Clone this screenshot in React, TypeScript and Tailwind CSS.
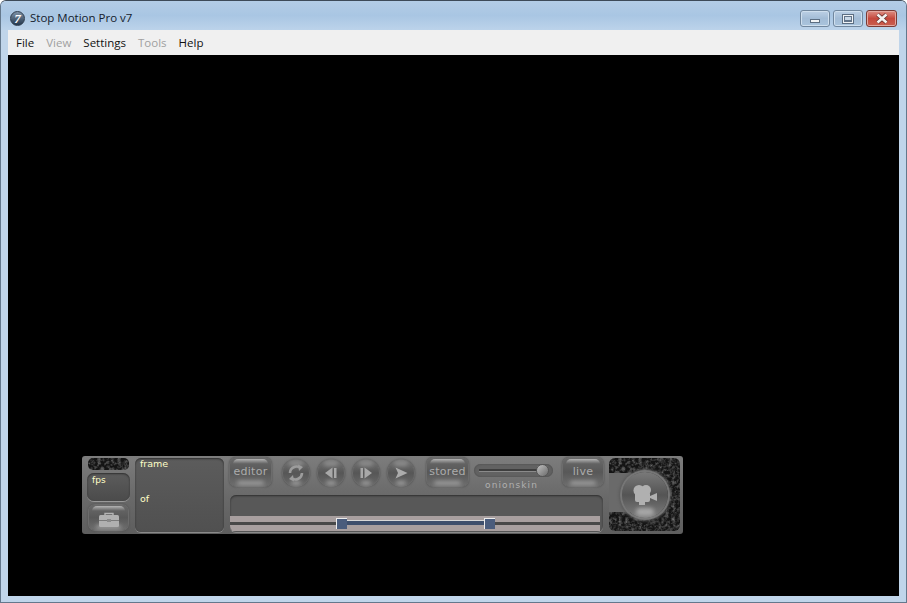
import React from 'react';

function Texture({ id }: { id: string }) {
  return (
    <svg className="absolute inset-0 w-full h-full" aria-hidden="true">
      <filter id={id}>
        <feTurbulence type="fractalNoise" baseFrequency="0.3" numOctaves="3" seed="4" />
        <feColorMatrix values="0 0 0 0 0.3  0 0 0 0 0.3  0 0 0 0 0.3  1.4 0 0 0 -0.55" />
      </filter>
      <rect width="100%" height="100%" fill="#141414" />
      <rect width="100%" height="100%" filter={`url(#${id})`} />
    </svg>
  );
}

function GlossButton({ label, className }: { label?: string; className: string }) {
  return (
    <div className={`relative flex items-center justify-center rounded-[6px] bg-gradient-to-b from-[#6a6a6a] via-[#585858] to-[#6e6e6e] shadow-[0_0_0_1px_#6c6c6c,0_0_2px_1px_#4a4a4a] ${className}`}>
      <div className="absolute top-[1px] left-[3px] right-[3px] h-[5px] rounded-t-[5px] bg-gradient-to-b from-[#b4b4b4] to-[#606060]" />
      <div className="absolute bottom-[1px] left-[7px] right-[7px] h-[4px] rounded-full bg-[#a0a0a0] blur-[2px]" />
      {label && <span className="relative -mt-[2px] text-[11px] leading-none tracking-[0.3px] text-[#acacac] font-['DejaVu_Sans',sans-serif]">{label}</span>}
    </div>
  );
}

function RoundButton({ children }: { children: React.ReactNode }) {
  return (
    <div className="relative flex items-center justify-center w-[26px] h-[26px] rounded-full bg-gradient-to-b from-[#747474] via-[#565656] to-[#6a6a6a] shadow-[0_0_0_1px_#6c6c6c,0_0_2px_1px_#484848]">
      <div className="absolute top-[1px] w-[14px] h-[5px] rounded-full bg-[#8e8e8e] blur-[2px]" />
      <div className="absolute bottom-[1px] w-[10px] h-[4px] rounded-full bg-[#a0a0a0] blur-[2px]" />
      <svg width="20" height="20" viewBox="0 0 20 20" className="relative">{children}</svg>
    </div>
  );
}

export default function App() {
  return (
    <div className="flex flex-col w-[907px] h-[603px] overflow-hidden rounded-t-[6px] bg-[#c0d5ea] border border-[#64788c] border-t-[#3d4a58] font-['Open_Sans',sans-serif]">
      {/* Title bar */}
      <div className="flex items-start justify-between h-[29px] pl-[9px] pr-[9px] bg-gradient-to-b from-[#b3cce6] via-[#a9c6e3] to-[#bcd3ea]">
        <div className="flex items-center gap-[5px] pt-[9px]">
          <div className="flex items-center justify-center w-[15px] h-[15px] rounded-full bg-gradient-to-b from-[#7f93a8] to-[#24384e] border border-[#2f3d4d] text-white text-[13px] font-bold italic leading-none font-['Liberation_Serif',serif]">7</div>
          <span className="text-[11.5px] leading-[16px] text-[#14202c]">Stop Motion Pro v7</span>
        </div>
        <div className="flex gap-[3px] pt-[9px]">
          <div className="flex items-center justify-center w-[30px] h-[17px] rounded-[3px] border border-[#71879e] bg-gradient-to-b from-[#bcd0e5] via-[#a3bcd6] to-[#a9c4dd] shadow-[inset_0_0_0_1px_#cfdfee]">
            <div className="w-[10px] h-[4px] mt-[4px] bg-[#f2f4f6] border border-[#5c6e82]" />
          </div>
          <div className="flex items-center justify-center w-[30px] h-[17px] rounded-[3px] border border-[#71879e] bg-gradient-to-b from-[#bcd0e5] via-[#a3bcd6] to-[#a9c4dd] shadow-[inset_0_0_0_1px_#cfdfee]">
            <div className="w-[10px] h-[8px] bg-[#63758a] border border-[#f0f3f6] outline outline-1 outline-[#5c6e82] flex items-center justify-center">
              <div className="w-[6px] h-[3px] bg-[#c9d8e7]" />
            </div>
          </div>
          <div className="flex items-center justify-center w-[31px] h-[17px] rounded-[3px] border border-[#7a3a35] bg-gradient-to-b from-[#dc8d84] via-[#c5483d] to-[#c95f50] shadow-[inset_0_0_0_1px_#e3a79f]">
            <svg width="14" height="11" viewBox="0 0 14 11">
              <path d="M2.5 1.5 L11.5 9.5 M11.5 1.5 L2.5 9.5" stroke="#5e2a28" strokeWidth="4" />
              <path d="M2.5 1.5 L11.5 9.5 M11.5 1.5 L2.5 9.5" stroke="#f4f1f0" strokeWidth="2.6" />
            </svg>
          </div>
        </div>
      </div>

      {/* Window body */}
      <div className="flex-1 flex flex-col mx-[7px] mb-[6px] min-h-0">
        <nav className="flex items-center gap-[12px] h-[25px] pl-[8px] bg-[#f0f0f0] text-[11.5px] text-[#111]">
          <span>File</span>
          <span className="text-[#a0a0a0]">View</span>
          <span>Settings</span>
          <span className="text-[#a0a0a0]">Tools</span>
          <span>Help</span>
        </nav>

        <main className="flex-1 flex items-end pl-[74px] pb-[62px] bg-black">
          {/* Control panel */}
          <div className="flex gap-[5px] w-[601px] h-[78px] pl-[5px] pr-[3px] py-[2px] rounded-[3px] bg-gradient-to-b from-[#7d7d7d] via-[#6a6a6a] to-[#5e5e5e] font-['DejaVu_Sans',sans-serif]">
            <div className="flex flex-col w-[43px] shrink-0">
              <div className="relative h-[12px] mx-[1px] rounded-[5px] overflow-hidden">
                <Texture id="noise-a" />
              </div>
              <div className="mt-[3px] h-[28px] pl-[5px] pt-[2px] rounded-[7px] bg-gradient-to-b from-[#5c5c5c] to-[#4b4b4b] shadow-[inset_0_1px_2px_#2e2e2e,0_1px_0_#999] text-[9px] leading-[11px] text-[#ffffc8]">fps</div>
              <GlossButton className="mt-[4px] h-[25px] mx-[2px]" />
              <div className="relative -mt-[18px] self-center">
                <svg width="24" height="16" viewBox="0 0 24 16">
                  <path d="M8 3 V1.5 H16 V3" fill="none" stroke="#b4b4b4" strokeWidth="1.4" />
                  <rect x="2" y="3" width="20" height="12" rx="1.5" fill="#b0b0b0" />
                  <rect x="2" y="8" width="20" height="1" fill="#7a7a7a" />
                  <rect x="10" y="7" width="4" height="3" fill="#8a8a8a" />
                </svg>
              </div>
            </div>

            <div className="w-[89px] h-[74px] shrink-0 pl-[5px] rounded-[6px] bg-gradient-to-b from-[#5c5c5c] to-[#505050] shadow-[inset_0_1px_2px_#2e2e2e,0_1px_0_#8a8a8a] text-[9.5px] leading-[11px] text-[#ffffc8]">
              <div>frame</div>
              <div className="mt-[24px]">of</div>
            </div>

            <div className="flex flex-col w-[374px] shrink-0">
              <div className="flex items-start h-[37px]">
                <GlossButton label="editor" className="w-[41px] h-[28px] ml-[1px]" />
                <div className="flex gap-[9px] ml-[12px] mt-[2px]">
                  <RoundButton>
                    <path d="M4 10 A6.5 6.5 0 0 1 14.5 5 M16 10 A6.5 6.5 0 0 1 5.5 15" fill="none" stroke="#9c9c9c" strokeWidth="2.6" />
                    <path d="M12 1.5 L17 4 L13 8 Z M8 18.5 L3 16 L7 12 Z" fill="#9c9c9c" />
                  </RoundButton>
                  <RoundButton>
                    <path d="M11.5 4.5 V15.5 L4 10 Z" fill="#a8a8a8" />
                    <rect x="13" y="5" width="2.5" height="10" fill="#a8a8a8" />
                  </RoundButton>
                  <RoundButton>
                    <path d="M8.5 4.5 V15.5 L16 10 Z" fill="#a8a8a8" />
                    <rect x="4.5" y="5" width="2.5" height="10" fill="#a8a8a8" />
                  </RoundButton>
                  <RoundButton>
                    <path d="M4.5 4.5 L16.5 10 L4.5 15.5 L7 10 Z" fill="#acacac" />
                  </RoundButton>
                </div>
                <GlossButton label="stored" className="w-[41px] h-[28px] ml-[13px]" />
                <div className="flex flex-col items-center ml-[6px] mt-[6px] w-[79px]">
                  <div className="relative flex items-center w-full h-[13px] pl-[5px] pr-[14px] rounded-full bg-[#626262] shadow-[inset_0_0_2px_#444]">
                    <div className="w-full h-[3px] bg-[#3e3e3e] border-b border-[#8a8a8a]" />
                    <div className="absolute right-[4px] w-[13px] h-[13px] rounded-full bg-gradient-to-br from-[#c2c2c2] to-[#6c6c6c] border border-[#555]" />
                  </div>
                  <span className="mt-[3px] -ml-[4px] text-[9px] leading-[10px] tracking-[1.1px] text-[#b0b0b0]">onionskin</span>
                </div>
                <GlossButton label="live" className="w-[40px] h-[28px] ml-[10px]" />
              </div>

              <div className="flex flex-col justify-end h-[37px] w-[373px] ml-[1px] pr-[3px] rounded-[6px] bg-[#585858] shadow-[inset_0_1px_2px_#2e2e2e,0_1px_0_#8a8a8a] overflow-hidden">
                <div className="flex items-center h-[15px] mb-[1px] bg-[#a89f9f]">
                  <div className="w-full h-[3px] bg-[#484848] flex items-end">
                    <div className="relative ml-[107px] w-[157px] h-[5px] bg-[#3e4f6c] border-t border-[#d8d8d8]">
                      <div className="absolute -left-[1px] -top-[3px] w-[11px] h-[11px] bg-[#4a5c7c] border-l border-t border-[#ececec]" />
                      <div className="absolute -right-[1px] -top-[3px] w-[11px] h-[11px] bg-[#4a5c7c] border-l border-t border-[#ececec]" />
                    </div>
                  </div>
                </div>
              </div>
            </div>

            {/* Capture button */}
            <div className="relative flex items-center justify-center w-[71px] h-[73px] ml-[1px] shrink-0 rounded-[6px] overflow-hidden">
              <Texture id="noise-b" />
              <div className="absolute -left-[8px] top-[15px] w-[40px] h-[39px] rounded-r-[12px] rounded-l-none bg-[#6a6a6a]" />
              <div className="relative flex items-center justify-center w-[46px] h-[46px] rounded-full bg-gradient-to-b from-[#7a7a7a] via-[#545454] to-[#7e7e7e] shadow-[0_0_0_2px_#767676,0_0_3px_3px_#5a5a5a]">
                <div className="absolute bottom-[2px] w-[18px] h-[8px] rounded-full bg-[#a8a8a8] blur-[2px]" />
                <svg width="26" height="22" viewBox="0 0 26 22" className="relative">
                  <circle cx="7" cy="6.5" r="5.5" fill="#b0b0b0" />
                  <circle cx="14" cy="6" r="5" fill="#b0b0b0" />
                  <rect x="3" y="8" width="15" height="10" rx="2" fill="#b0b0b0" />
                  <path d="M18 12 L25 9 V17 L18 14 Z" fill="#b0b0b0" />
                  <rect x="7" y="17" width="6" height="4" fill="#b0b0b0" />
                </svg>
              </div>
            </div>
          </div>
        </main>
      </div>
    </div>
  );
}
